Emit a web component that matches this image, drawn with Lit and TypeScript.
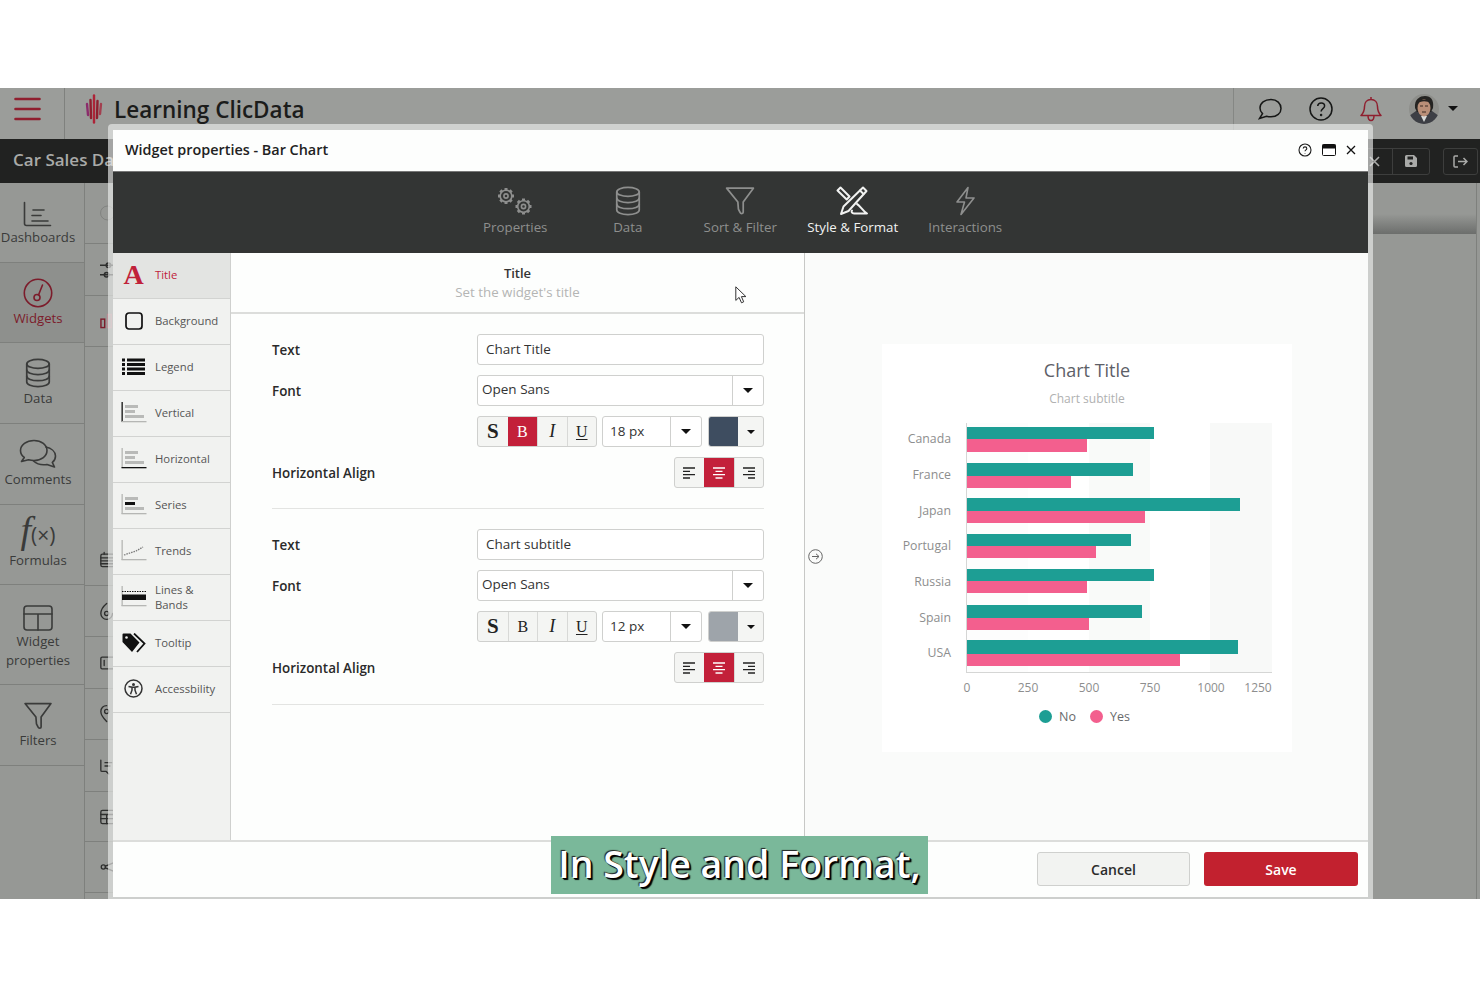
import { LitElement, html, svg, css } from 'lit';
import { customElement } from 'lit/decorators.js';

const ic = (w: number, h: number, body: unknown, vb = `0 0 ${w} ${h}`) =>
  html`<svg width=${w} height=${h} viewBox=${vb} fill="none" stroke="currentColor" stroke-width="1.6" stroke-linecap="round" stroke-linejoin="round">${body}</svg>`;

const gear = (cx: number, cy: number, r: number) => {
  const teeth = [0, 45, 90, 135, 180, 225, 270, 315].map((a) => {
    const t = (a * Math.PI) / 180;
    return svg`<line x1=${cx + Math.cos(t) * r} y1=${cy + Math.sin(t) * r} x2=${cx + Math.cos(t) * (r + 2.2)} y2=${cy + Math.sin(t) * (r + 2.2)} stroke-width="3" stroke-linecap="butt"></line>`;
  });
  return svg`<circle cx=${cx} cy=${cy} r=${r}></circle><circle cx=${cx} cy=${cy} r=${r * 0.36}></circle>${teeth}`;
};

const dbIcon = (w: number, h: number) => ic(w, h, svg`<ellipse cx="12" cy="5.5" rx="10.5" ry="4.2"></ellipse><path d="M1.5 5.5v17c0 2.4 4.7 4.2 10.5 4.2s10.5-1.8 10.5-4.2v-17"></path><path d="M1.5 11.3c0 2.4 4.7 4.2 10.5 4.2s10.5-1.8 10.5-4.2"></path><path d="M1.5 17c0 2.4 4.7 4.2 10.5 4.2S22.500 19.400 22.500 17"></path>`, '0 0 24 28');
const funnel = (w: number, h: number) => ic(w, h, svg`<path d="M1.500 1.500h25L17 14.500V24c0 1.600-2.500 1.600-3 0l-1.500-3-.5-6.500z"></path>`, '0 0 28 27');

const axisBars = (kind: string) => {
  const grey = '#b9bab8';
  const dark = '#111';
  const vAxis = kind === 'vertical' ? dark : '#b5b6b4';
  const hAxis = kind === 'horizontal' ? dark : '#b5b6b4';
  return html`<svg width="26" height="22" viewBox="0 0 26 22">
    <rect x="0.500" y="0" width="1.300" height="20" fill=${vAxis}></rect>
    <rect x="0.500" y="19" width="25" height="1.300" fill=${hAxis}></rect>
    ${kind === 'trends'
      ? svg`<path d="M3 15l6-2 6-2 7-4" stroke="#777" stroke-width="1.300" stroke-dasharray="1.500 1" fill="none"></path>`
      : kind === 'bands'
        ? svg`<rect x="1" y="8.500" width="24" height="5.500" fill=${dark}></rect><path d="M1 5.500h24" stroke=${dark} stroke-width="1" stroke-dasharray="1.500 1"></path>`
        : svg`<rect x="4" y="3" width="13" height="3" fill=${grey}></rect>
            <rect x="4" y="8" width="10" height="3" fill=${kind === 'series' ? dark : grey}></rect>
            <rect x="4" y="13" width="19" height="3" fill=${grey}></rect>`}
  </svg>`;
};

const sideIcons: Record<string, unknown> = {
  Dashboards: ic(30, 26, svg`<path d="M1.500 1.500v21c0 1.200.8 2 2 2h24"></path><path d="M10 9h11M9 14.500h9M9 20h16"></path>`),
  Widgets: ic(30, 30, svg`<circle cx="15" cy="15" r="13.700"></circle><circle cx="14" cy="19.500" r="3"></circle><path d="M15.500 17l4-10"></path>`),
  Data: dbIcon(26, 30),
  Comments: ic(38, 30, svg`<path d="M15 1.500C7.500 1.500 1.500 6 1.500 11.500c0 3 1.400 5.200 3.800 7l-2.800 4 7-1.800c2 .6 3.600.8 5.500.8 7.500 0 13-4.500 13-10S22.500 1.500 15 1.500z"></path><path d="M27 8c5 1.200 9.500 4.500 9.500 9 0 2.800-1.200 5-3.200 6.400l2.200 4.600-7.500-2.500c-5 .8-10-.3-13.500-3.500"></path>`),
  Widget: ic(30, 26, svg`<rect x="1" y="1" width="28" height="24" rx="3"></rect><path d="M1 9h28M15 9v16"></path>`),
  Filters: funnel(30, 28),
};

const sideItems = [
  { id: 'Dashboards', label: 'Dashboards', h: 80, pt: 3, pb: 0 },
  { id: 'Widgets', label: 'Widgets', h: 80, active: true, pt: 0, pb: 0 },
  { id: 'Data', label: 'Data', h: 81, pt: 0, pb: 0 },
  { id: 'Comments', label: 'Comments', h: 81, pt: 0, pb: 0 },
  { id: 'Formulas', label: 'Formulas', h: 80, pt: 0, pb: 4 },
  { id: 'Widget', label: 'Widget\nproperties', h: 100, pt: 5, pb: 0 },
  { id: 'Filters', label: 'Filters', h: 81, pt: 2, pb: 0 },
];

// rows of the list behind the dialog, only their left edge shows
const backRows = [
  { h: 61, icon: html`<svg width="28" height="28" viewBox="0 0 28 28" fill="none" stroke="#6f716e"><circle cx="14" cy="14" r="13"></circle></svg>` },
  { h: 52, icon: ic(16, 20, svg`<path d="M0 5h15M0 15h15"></path><circle cx="9" cy="5" r="2.400"></circle><circle cx="7" cy="15" r="2.400"></circle>`) },
  { h: 51, icon: html`<svg width="16" height="16" viewBox="0 0 16 16" fill="none" stroke-width="1.500"><rect x="1" y="6" width="4" height="9" stroke="#7c1c2b"></rect><rect x="8" y="1" width="4" height="14" stroke="#b98f96"></rect></svg>` },
  { h: 188, icon: '' },
  { h: 51, icon: ic(18, 20, svg`<rect x="1" y="3" width="16" height="15" rx="2"></rect><path d="M1 7.500h16M1 11h16M1 14.500h16M5 1v2"></path>`) },
  { h: 51, icon: ic(18, 22, svg`<path d="M8 2c-6 5-7 9-7 12a7 7 0 0 0 14 0"></path><circle cx="8" cy="14" r="2.500"></circle>`) },
  { h: 52, icon: ic(18, 16, svg`<rect x="1" y="1" width="16" height="14" rx="1.500"></rect><path d="M5 5v6"></path>`) },
  { h: 51, icon: ic(18, 22, svg`<path d="M8 1C4 1 1 4 1 8c0 5 7 12 7 12"></path><circle cx="8" cy="8" r="2.500"></circle>`) },
  { h: 52, icon: ic(18, 20, svg`<path d="M1 3v12c0 1 .5 1.500 1.500 1.500h5l3 3M6 6h8M6 10h6"></path>`) },
  { h: 50, icon: ic(18, 18, svg`<rect x="1" y="1" width="16" height="16" rx="2"></rect><path d="M1 6h16M1 11h16M8 6v11"></path>`) },
  { h: 51, icon: ic(18, 12, svg`<circle cx="4" cy="6" r="2.500"></circle><path d="M6.500 5L16 1M6.500 7L16 11"></path>`) },
];

const tabs = [
  { label: 'Properties', icon: ic(38, 30, svg`${gear(10, 10, 5.800)}${gear(27.500, 20.500, 5.800)}`) },
  { label: 'Data', icon: dbIcon(26, 30) },
  { label: 'Sort & Filter', icon: funnel(30, 28) },
  {
    label: 'Style & Format',
    active: true,
    icon: html`<svg width="34" height="30" viewBox="0 0 34 30" fill="none" stroke="currentColor" stroke-width="2" stroke-linecap="round" stroke-linejoin="round"><path d="M1.500 4.500L4.500 1.500l9 9-2.800 3z"></path><path d="M27 1.500l3.500 3.500L12.500 25 5 28l2.500-7.500z"></path><path d="M24 4.500l3.500 3.500"></path><path d="M21 18c3 1.500 5 6 10 9.500H18c-2 0-3-1.500-2-3"></path></svg>`,
  },
  { label: 'Interactions', icon: ic(24, 30, svg`<path d="M15 1.500L4 16h7.500L8 28.500 21 12h-8z"></path>`) },
];

const tree = [
  { label: 'Title', h: 46, active: true },
  { label: 'Background', h: 46 },
  { label: 'Legend', h: 46 },
  { label: 'Vertical', h: 46 },
  { label: 'Horizontal', h: 46 },
  { label: 'Series', h: 46 },
  { label: 'Trends', h: 46 },
  { label: 'Lines &\nBands', h: 46 },
  { label: 'Tooltip', h: 46 },
  { label: 'Accessbility', h: 46 },
];

const treeIcon = (label: string) => {
  switch (label) {
    case 'Title':
      return html`<span class="serif-a">A</span>`;
    case 'Background':
      return html`<svg width="18" height="18" viewBox="0 0 18 18"><rect x="1" y="1" width="16" height="16" rx="3" fill="none" stroke="#111" stroke-width="1.700"></rect></svg>`;
    case 'Legend':
      return html`<svg width="23" height="18" viewBox="0 0 23 18" fill="#111"><rect x="0" y="0.500" width="3" height="3"></rect><rect x="5" y="0.500" width="18" height="3"></rect><rect x="0" y="5" width="3" height="3"></rect><rect x="5" y="5" width="18" height="3"></rect><rect x="0" y="9.500" width="3" height="3"></rect><rect x="5" y="9.500" width="18" height="3"></rect><rect x="0" y="14" width="3" height="3"></rect><rect x="5" y="14" width="18" height="3"></rect></svg>`;
    case 'Vertical':
      return axisBars('vertical');
    case 'Horizontal':
      return axisBars('horizontal');
    case 'Series':
      return axisBars('series');
    case 'Trends':
      return axisBars('trends');
    case 'Lines &\nBands':
      return axisBars('bands');
    case 'Tooltip':
      return html`<svg width="24" height="20" viewBox="0 0 24 20"><path d="M0.500 1.500A1 1 0 0 1 1.500 .5h7l9 9-7.500 9.500-9.500-10z" fill="#111"></path><path d="M12 .5l10.500 10-7.500 8.500" fill="none" stroke="#111" stroke-width="1.800"></path><circle cx="4.500" cy="4.500" r="1.300" fill="#f1f2f0"></circle></svg>`;
    default:
      return html`<svg width="19" height="19" viewBox="0 0 19 19"><circle cx="9.500" cy="9.500" r="8.500" fill="none" stroke="#333" stroke-width="1.500"></circle><circle cx="9.500" cy="5.500" r="1.500" fill="#333"></circle><path d="M4.500 7.500l3.500.7v3l-1.500 4M14.500 7.500l-3.500.7v3l1.500 4M8 8.200h3" fill="none" stroke="#333" stroke-width="1.500"></path></svg>`;
  }
};

const alignLeft = html`<svg width="14" height="14" viewBox="0 0 14 14" stroke="currentColor" stroke-width="1.300"><path d="M1 2h12M1 5.300h7M1 8.600h12M1 12h7"></path></svg>`;
const alignCenter = html`<svg width="14" height="14" viewBox="0 0 14 14" stroke="currentColor" stroke-width="1.300"><path d="M1 2h12M3.500 5.300h7M1 8.600h12M3.500 12h7"></path></svg>`;
const alignRight = html`<svg width="14" height="14" viewBox="0 0 14 14" stroke="currentColor" stroke-width="1.300"><path d="M1 2h12M6 5.300h7M1 8.600h12M6 12h7"></path></svg>`;

const chartRows = [
  { name: 'Canada', no: 187, yes: 120, nh: 12, yh: 13 },
  { name: 'France', no: 166, yes: 104, nh: 13, yh: 12 },
  { name: 'Japan', no: 273, yes: 178, nh: 13, yh: 12 },
  { name: 'Portugal', no: 164, yes: 129, nh: 12, yh: 12 },
  { name: 'Russia', no: 187, yes: 120, nh: 12, yh: 12 },
  { name: 'Spain', no: 175, yes: 122, nh: 13, yh: 12 },
  { name: 'USA', no: 271, yes: 213, nh: 14, yh: 12 },
];

@customElement('app-root')
export class AppRoot extends LitElement {
  static styles = css`
    :host { display: block; width: 1480px; height: 987px; box-sizing: border-box; padding-top: 88px; background: #fff; overflow: hidden; font-family: "Open Sans", "Noto Sans", sans-serif; }
    .stage { position: relative; height: 811px; background: #969895; overflow: hidden; }
    .topbar { height: 51px; display: flex; align-items: center; background: #9b9d9a; color: #1b1c1b; }
    .burger { width: 65px; height: 51px; display: flex; align-items: center; justify-content: center; border-right: 1px solid #7f817e; box-sizing: border-box; padding: 0 9px 10px 0; }
    .brand { display: flex; align-items: center; gap: 11px; margin-left: 20px; padding-bottom: 9px; font-size: 22.500px; font-weight: 600; flex: 1; }
    .top-right { width: 247px; height: 51px; border-left: 1px solid #858784; box-sizing: border-box; display: flex; align-items: center; padding: 0 0 10px 24px; gap: 27px; }
    .who { display: flex; align-items: center; gap: 9px; }
    .caret { display: block; width: 0; height: 0; border-left: 5px solid transparent; border-right: 5px solid transparent; border-top: 5px solid #111; }
    .darkbar { height: 44px; background: #212221; color: #a9aaa8; font-size: 17px; font-weight: 600; display: flex; align-items: center; padding: 0 2px 3px 13px; box-sizing: border-box; }
    .crumb { flex: 1; }
    .bar-btns { display: flex; gap: 13px; padding-top: 3px; }
    .bar-btn { height: 27px; border: 1px solid #3d3e3d; border-radius: 3px; box-sizing: border-box; display: flex; color: #a9aaa8; }
    .bar-btn span { width: 36px; display: flex; align-items: center; justify-content: center; }
    .bar-btn.solo span { width: 33px; }
    .bar-btn span + span { border-left: 1px solid #3d3e3d; }
    .body { display: flex; height: 716px; }
    .side { width: 85px; border-right: 1px solid #7e807d; box-sizing: border-box; flex: none; }
    .side-item { display: flex; flex-direction: column; align-items: center; justify-content: center; gap: 1px; box-sizing: border-box; border-bottom: 1px solid #7e807d; color: #3a3b3a; font-size: 13.200px; line-height: 19px; text-align: center; white-space: pre-line; padding-right: 8px; }
    .side-item.active { color: #7c1c2b; background: #8e908d; }
    .fx { font-family: "Liberation Serif", serif; font-size: 38px; line-height: 30px; font-style: italic; }
    .fx span { font-size: 21px; font-family: "Open Sans", sans-serif; font-style: normal; }
    .second { width: 30px; flex: none; }
    .back-row { display: flex; align-items: center; padding-left: 15px; box-sizing: border-box; border-bottom: 1px solid #7e807d; color: #2e2f2e; overflow: hidden; }
    .back-row.open { border-bottom: 0; }
    .backfill { flex: 1; margin: 0 3px 0 1258px; border-right: 1px solid #7e807d; }
    .backrule { height: 20px; margin-top: 31px; background: linear-gradient(180deg, rgba(112, 114, 112, 0), #6c6e6c); }

    .halo { position: absolute; left: 108px; top: 36px; width: 1265px; height: 775px; background: rgba(235, 236, 235, 0.65); border-radius: 4px 4px 0 0; box-sizing: border-box; padding: 6px 5px 2px; }
    .modal { height: 100%; background: #fdfefd; display: flex; flex-direction: column; }
    .m-head { height: 41px; flex: none; display: flex; align-items: center; padding: 0 12px 2px 12px; box-sizing: border-box; font-size: 14.400px; font-weight: 600; color: #222; justify-content: space-between; }
    .m-actions { display: flex; align-items: center; gap: 10px; color: #1c1c1c; }
    .tabs { height: 82px; flex: none; background: #333534; border-top: 1px solid #777; box-sizing: border-box; display: flex; padding-left: 346px; }
    .tab { width: 112.500px; display: flex; flex-direction: column; align-items: center; color: #8e8f8e; font-size: 13.300px; padding-top: 14px; box-sizing: border-box; }
    .tab svg { height: 30px; }
    .tab span { line-height: 19px; margin-top: 2px; white-space: nowrap; }
    .tab.active { color: #f1f2f1; }
    .m-main { flex: 1; display: flex; min-height: 0; }
    .tree { width: 118px; flex: none; background: #f1f2f0; border-right: 1px solid #cfd0ce; box-sizing: border-box; }
    .tree-item { display: grid; grid-template-columns: 42px 1fr; align-items: center; box-sizing: border-box; border-bottom: 1px solid #d2d3d1; font-size: 11.300px; line-height: 15px; color: #555; white-space: pre-line; padding-bottom: 2px; }
    .tree-item .ti { display: flex; justify-content: center; padding-right: 1px; }
    .tree-item.active { background: #e3e4e2; color: #c0223a; }
    .serif-a { font-family: "Liberation Serif", serif; font-weight: 700; font-size: 28px; line-height: 26px; color: #c0223a; }
    .form { width: 574px; flex: none; border-right: 1px solid #c7c8c6; box-sizing: border-box; }
    .f-title { border-bottom: 2px solid #dcdddb; display: flex; flex-direction: column; align-items: center; padding-top: 11px; height: 48px; }
    .f-title b { font-size: 13px; font-weight: 600; color: #333; line-height: 19px; }
    .f-title span { font-size: 13.300px; color: #b4b5b4; line-height: 19px; }
    .section { margin: 20px 40px 0 41px; border-bottom: 1px solid #e3e4e2; padding-bottom: 20px; display: flex; flex-direction: column; }
    .section + .section { padding-bottom: 21px; }
    .row { display: grid; grid-template-columns: 205px 287px; align-items: center; min-height: 31px; }
    .row label { font-size: 13.400px; font-weight: 600; color: #2a2a2a; }
    .row + .row { margin-top: 10px; }
    .field { height: 31px; border: 1px solid #cfd0ce; border-radius: 3px; box-sizing: border-box; font-size: 13.500px; color: #333; display: flex; align-items: center; background: #fff; }
    .input { padding: 0 0 2px 8px; }
    .select > span:first-child { flex: 1; padding: 0 0 4px 4px; }
    .arrow { width: 31px; height: 100%; border-left: 1px solid #cfd0ce; box-sizing: border-box; display: flex; align-items: center; justify-content: center; }
    .tools { grid-column: 2; display: flex; gap: 5px; }
    .group { display: flex; height: 31px; border: 1px solid #cfd0ce; border-radius: 3px; box-sizing: border-box; background: #f4f5f3; overflow: hidden; color: #222; }
    .group > span { width: 29.500px; display: flex; align-items: center; justify-content: center; border-left: 1px solid #d8d9d7; box-sizing: border-box; font-size: 16px; }
    .group > span:first-child { border-left: 0; }
    .group > span.on { background: #c3203a; color: #fff; border-left: 0; }
    .s { font-family: "Liberation Serif", serif; font-weight: 700; font-size: 21px !important; }
    .b { font-family: "Liberation Serif", serif; }
    .i { font-family: "Liberation Serif", serif; font-style: italic; font-size: 18px !important; }
    .u { font-family: "Liberation Serif", serif; text-decoration: underline; text-underline-offset: 2px; }
    .size { width: 100px; }
    .size > span:first-child { flex: 1; padding: 0 0 2px 7px; }
    .colour { width: 56px; margin-left: 1px; display: flex; height: 31px; border: 1px solid #cfd0ce; border-radius: 3px; box-sizing: border-box; background: #f4f5f3; overflow: hidden; }
    .swatch { width: 29px; }
    .colour .mini { flex: 1; display: flex; align-items: center; justify-content: center; }
    .mini .caret { border-left-width: 4.500px; border-right-width: 4.500px; border-top-width: 4.500px; }
    .align-row { justify-content: flex-end; }
    .preview { flex: 1; position: relative; background: #fafbfa; display: flex; align-items: flex-start; justify-content: center; padding: 91px 0 0 1px; box-sizing: border-box; }
    .toggle { position: absolute; left: 3px; top: 296px; color: #666; }
    .m-foot { height: 57px; flex: none; border-top: 2px solid #dcdddb; box-sizing: border-box; display: flex; justify-content: flex-end; align-items: center; gap: 14px; padding: 0 10px 1px 0; }
    .btn { width: 154px; height: 34px; border-radius: 3px; box-sizing: border-box; display: flex; align-items: center; justify-content: center; font-size: 14px; font-weight: 600; }
    .cancel { border: 1px solid #cfd0ce; background: #f2f3f1; color: #2b2b2b; width: 153px; }
    .save { background: #c2212f; color: #fff; }

    .chart { width: 410px; height: 408px; background: #fff; display: flex; flex-direction: column; align-items: center; }
    .c-title { font-size: 18px; color: #5d6067; line-height: 26px; margin-top: 13px; }
    .c-sub { font-size: 12px; color: #b0b1b1; line-height: 18px; margin-top: 7px; }
    .plot { display: grid; grid-template-columns: 84px 306px; margin: 15px 20px 0 0; width: 390px; }
    .names { display: flex; flex-direction: column; margin-top: -2px; }
    .names span { height: 35.700px; flex: none; font-size: 12.300px; color: #8d8e8e; display: flex; align-items: center; justify-content: flex-end; padding-right: 15px; }
    .bars { border-left: 1px solid #d5d6d5; border-bottom: 1px solid #d5d6d5; display: flex; flex-direction: column; height: 250px; box-sizing: border-box; background: linear-gradient(90deg, #fdfdfd 0 61px, #fff 61px 122px, #f9faf9 122px 183px, #fff 183px 243px, #f8f9f8 243px 306px); padding-top: 4px; }
    .bar-group { height: 35.500px; display: flex; flex-direction: column; flex: none; }
    .bar { flex: none; }
    .teal { background: #1d9e94; }
    .pink { background: #f35f8e; }
    .ticks { grid-column: 2; position: relative; height: 20px; margin-top: 6px; font-size: 12px; color: #8d8e8e; }
    .ticks span { position: absolute; top: 0; transform: translateX(-50%); }
    .legend { display: flex; align-items: center; gap: 14px; font-size: 12.500px; color: #686a6c; margin: 9px 5px 0 0; }
    .legend i { display: inline-block; width: 13px; height: 13px; border-radius: 50%; margin-right: 7px; vertical-align: -2px; }

    .caption { position: absolute; left: 551px; top: 748px; width: 377px; height: 58px; padding-bottom: 3px; box-sizing: border-box; background: #7ab89a; color: #fff; font-size: 37.500px; font-weight: 600; display: flex; align-items: center; justify-content: center; white-space: nowrap; text-shadow: 2px 2px 1px #000, 1px 1px 0 #000, -1px -1px 1px #222; }
    .cursor { position: absolute; left: 735px; top: 198px; }
  `;

  render() {
    return html`<div class="stage">
      <div class="topbar">
        <div class="burger">
          <svg width="27" height="24" viewBox="0 0 27 24" stroke="#8f1f2f" stroke-width="2.600" stroke-linecap="round"><path d="M1.500 2h24M1.500 12h24M1.500 22h24"></path></svg>
        </div>
        <div class="brand">
          <svg width="18" height="30" viewBox="0 0 18 30" fill="none" stroke-width="2.400" stroke-linecap="round">
            <path d="M2 10l1 11" stroke="#8b2c6c"></path>
            <path d="M5.500 6l.5 18" stroke="#8f1f2f"></path>
            <path d="M9 1.500v27" stroke="#ad2438"></path>
            <path d="M12.500 7l-.5 17" stroke="#8f1f2f"></path>
            <path d="M16 10l-1 10" stroke="#a33f4f"></path>
          </svg>
          <span>Learning ClicData</span>
        </div>
        <div class="top-right">
          <svg width="24" height="22" viewBox="0 0 24 22" fill="none" stroke="#161716" stroke-width="1.500"><path d="M13 1.500C6.500 1.500 2 5 2 10c0 2.400 1 4.200 2.500 5.600L1.500 20.500l7-2.300c1.400.4 2.800.6 4.500.6 6 0 10-3.600 10-8.400s-4-9-10-9z"></path></svg>
          <svg width="24" height="24" viewBox="0 0 24 24" fill="none" stroke="#161716" stroke-width="1.500"><circle cx="12" cy="12" r="11"></circle><path d="M8.700 9c.3-2 1.700-3 3.500-3 2 0 3.400 1.200 3.400 3 0 2.600-3.500 2.700-3.500 5.500"></path><circle cx="12.100" cy="18" r=".5"></circle></svg>
          <svg width="22" height="26" viewBox="0 0 22 26" fill="none" stroke="#8f1f2f" stroke-width="1.500" stroke-linejoin="round"><path d="M11 1v2.500M11 3.500c-4 0-6.500 3-6.500 7 0 4.500-1 6.500-3.500 9h20c-2.500-2.500-3.500-4.500-3.500-9 0-4-2.500-7-6.500-7zM8 19.500c0 3 1.300 5 3 5s3-2 3-5"></path></svg>
          <span class="who">
            <svg width="30" height="30" viewBox="0 0 30 30">
              <defs><clipPath id="face"><circle cx="15" cy="15" r="15"></circle></clipPath></defs>
              <g clip-path="url(#face)">
                <rect width="30" height="30" fill="#8e8f8b"></rect>
                <path d="M0 30V22l7-5h16l7 5v8z" fill="#3d3f45"></path>
                <path d="M12 22l3 6 3-6z" fill="#d9dbd9"></path>
                <path d="M6 14C5 5 11 2 16 2c6 0 9 4 8 12l-2 4H8z" fill="#252422"></path>
                <ellipse cx="15" cy="14" rx="6.500" ry="8.500" fill="#b98f78"></ellipse>
                <path d="M8.500 10c2-3 10-4 13 0l-.5-4H9z" fill="#252422"></path>
                <path d="M11 12h3M16 12h3M13 18h4" stroke="#3b2a22" stroke-width="1"></path>
              </g>
            </svg>
            <span class="caret"></span>
          </span>
        </div>
      </div>
      <div class="darkbar">
        <span class="crumb">Car Sales Da</span>
        <span class="bar-btns">
          <span class="bar-btn">
            <span><svg width="11" height="11" viewBox="0 0 11 11" stroke="currentColor" stroke-width="1.600"><path d="M1 1l9 9M10 1l-9 9"></path></svg></span>
            <span><svg width="14" height="14" viewBox="0 0 14 14"><path d="M1 2.500A1.500 1.500 0 0 1 2.500 1H10l3 3v7.500a1.500 1.500 0 0 1-1.500 1.500h-9A1.500 1.500 0 0 1 1 11.500z" fill="currentColor"></path><rect x="3.500" y="2.500" width="5.500" height="3" fill="#212221"></rect><circle cx="7" cy="9.500" r="1.600" fill="#212221"></circle></svg></span>
          </span>
          <span class="bar-btn solo">
            <span><svg width="15" height="13" viewBox="0 0 15 13" fill="none" stroke="currentColor" stroke-width="1.500"><path d="M5 1H2a1 1 0 0 0-1 1v9a1 1 0 0 0 1 1h3M5 6.500h9M10.500 3l3.500 3.500-3.500 3.500"></path></svg></span>
          </span>
        </span>
      </div>
      <div class="body">
        <div class="side">
          ${sideItems.map(
            (s) => html`<div class="side-item ${s.active ? 'active' : ''}" style="height:${s.h}px;padding-top:${s.pt}px;padding-bottom:${s.pb}px">
              ${s.id === 'Formulas' ? html`<span class="fx">f<span>(×)</span></span>` : sideIcons[s.id]}
              <span>${s.label}</span>
            </div>`,
          )}
        </div>
        <div class="second">
          ${backRows.map((r) => html`<div class="back-row ${r.icon ? '' : 'open'}" style="height:${r.h}px">${r.icon}</div>`)}
        </div>
        <div class="backfill"><div class="backrule"></div></div>
      </div>

      <div class="halo">
        <div class="modal">
          <div class="m-head">
            <span>Widget properties - Bar Chart</span>
            <span class="m-actions">
              <svg width="14" height="14" viewBox="0 0 14 14" fill="none" stroke="currentColor" stroke-width="1.100"><circle cx="7" cy="7" r="6"></circle><path d="M5.200 5.500c.1-1 .9-1.600 1.800-1.600 1 0 1.800.6 1.800 1.600 0 1.300-1.800 1.400-1.800 2.800M7 10v.4"></path></svg>
              <svg width="14" height="12" viewBox="0 0 14 12"><rect x=".5" y=".5" width="13" height="11" rx="1" fill="#fff" stroke="#111"></rect><rect x=".5" y=".5" width="13" height="4" fill="#111"></rect></svg>
              <svg width="10" height="10" viewBox="0 0 10 10" stroke="#111" stroke-width="1.300"><path d="M1 1l8 8M9 1l-8 8"></path></svg>
            </span>
          </div>
          <div class="tabs">
            ${tabs.map((t) => html`<div class="tab ${t.active ? 'active' : ''}">${t.icon}<span>${t.label}</span></div>`)}
          </div>
          <div class="m-main">
            <div class="tree">
              ${tree.map(
                (t) => html`<div class="tree-item ${t.active ? 'active' : ''}" style="height:${t.h}px">
                  <span class="ti">${treeIcon(t.label)}</span><span>${t.label}</span>
                </div>`,
              )}
            </div>
            <div class="form">
              <div class="f-title"><b>Title</b><span>Set the widget's title</span></div>
              ${this.fontSection('Chart Title', '18 px', '#3e4d60', true)}
              ${this.fontSection('Chart subtitle', '12 px', '#9ea4aa', false)}
            </div>
            <div class="preview">
              <svg class="toggle" width="15" height="15" viewBox="0 0 15 15" fill="none" stroke="currentColor" stroke-width="1"><circle cx="7.500" cy="7.500" r="6.800"></circle><path d="M4 7.500h7M8 4.800l3 2.700-3 2.700"></path></svg>
              ${this.chart()}
            </div>
          </div>
          <div class="m-foot">
            <div class="btn cancel">Cancel</div>
            <div class="btn save">Save</div>
          </div>
        </div>
      </div>
      <div class="caption">In Style and Format,</div>
      <svg class="cursor" width="13" height="18" viewBox="0 0 13 18"><path d="M.8.8v13.600l3.300-3 2.400 5.400 2.200-1-2.300-5.200h4.500z" fill="#fff" stroke="#333" stroke-width="1"></path></svg>
    </div>`;
  }

  fontSection(text: string, size: string, colour: string, bold: boolean) {
    const arrow = html`<span class="arrow"><span class="caret"></span></span>`;
    return html`<div class="section">
      <div class="row"><label>Text</label><div class="field input">${text}</div></div>
      <div class="row"><label>Font</label><div class="field select"><span>Open Sans</span>${arrow}</div></div>
      <div class="row">
        <div class="tools">
          <div class="group">
            <span class="s">S</span><span class="b ${bold ? 'on' : ''}">B</span><span class="i">I</span><span class="u">U</span>
          </div>
          <div class="field size"><span>${size}</span>${arrow}</div>
          <div class="colour"><div class="swatch" style="background:${colour}"></div><div class="mini"><span class="caret"></span></div></div>
        </div>
      </div>
      <div class="row">
        <label>Horizontal Align</label>
        <div class="tools align-row">
          <div class="group"><span>${alignLeft}</span><span class="on">${alignCenter}</span><span>${alignRight}</span></div>
        </div>
      </div>
    </div>`;
  }

  chart() {
    const ticks = [
      ['0', 1],
      ['250', 62],
      ['500', 123],
      ['750', 184],
      ['1000', 245],
      ['1250', 292],
    ];
    return html`<div class="chart">
      <div class="c-title">Chart Title</div>
      <div class="c-sub">Chart subtitle</div>
      <div class="plot">
        <div class="names">${chartRows.map((r) => html`<span>${r.name}</span>`)}</div>
        <div class="bars">
          ${chartRows.map(
            (r) => html`<div class="bar-group">
              <div class="bar teal" style="width:${r.no}px;height:${r.nh}px"></div>
              <div class="bar pink" style="width:${r.yes}px;height:${r.yh}px"></div>
            </div>`,
          )}
        </div>
        <div class="ticks">${ticks.map(([l, x]) => html`<span style="left:${x}px">${l}</span>`)}</div>
      </div>
      <div class="legend"><span><i class="teal"></i>No</span><span><i class="pink"></i>Yes</span></div>
    </div>`;
  }
}
